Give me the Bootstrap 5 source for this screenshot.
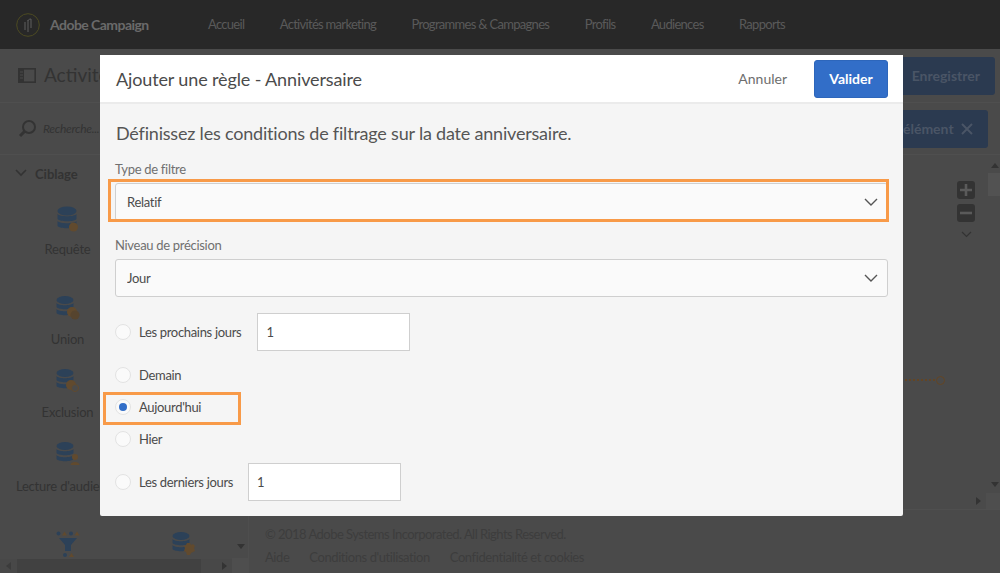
<!DOCTYPE html>
<html lang="fr">
<head>
<meta charset="utf-8">
<title>Adobe Campaign</title>
<link href="https://cdn.jsdelivr.net/npm/bootstrap@5.3.0/dist/css/bootstrap.min.css" rel="stylesheet">
<style>
html,body{height:573px;overflow:hidden}
body{background:#4a4a4a;font-family:"Lato","Noto Sans",sans-serif;font-size:13px;color:#333;position:relative}
.top-bar{height:49px;background:#282828;padding-left:16px}
.brand-txt{font-size:14px;font-weight:700;color:#6a6a6a;margin-left:10px;white-space:nowrap;width:158px;letter-spacing:-.55px}
.top-link{font-size:13px;color:#5a5a5a;margin-right:35.4px;white-space:nowrap;letter-spacing:-.7px}
.tool-row{height:54px;padding:8px 5px 8px 18px;border-bottom:1px solid #4f4f4f}
.page-title{font-size:19px;color:#333;margin-left:8px}
.dim-btn{background:#2b3a50;color:#4a5566;border-radius:3px;height:38px;font-size:14px;font-weight:700;display:flex;align-items:center;padding:0 15px}
.search-row{height:52px;padding-right:12px;border-bottom:1px solid #4f4f4f}
.search-side{width:249px;padding-left:18px;font-style:italic;color:#333;font-size:12px;gap:7px;letter-spacing:-.3px}
.work-row{height:418px}
.side-col{width:249px;border-right:1px solid #4e4e4e;position:relative}
.side-head{padding:10px 0 0 15px;height:33px;gap:8px;color:#333;font-weight:700;font-size:13px}
.tile-grid{display:grid;grid-template-columns:135px 100px;flex:1 1 0;min-height:0;overflow:hidden}
.tile{grid-column:1;text-align:center;color:#333;font-size:13px;height:73px;white-space:nowrap;letter-spacing:-.2px}
.tile svg{display:block;margin:0 auto 10px}
.tile.tile-first{height:108px;padding-top:18px}
.tile.tile-first svg{margin-bottom:7px}
.tile.tile-last{height:89px}
.tile.tile-last svg{margin-bottom:11px}
.tile.tile-b{grid-column:2;grid-row:5;text-align:left;padding:1px 0 0 37px}
.tile.tile-b svg{margin:0}
.tile.tile-a{grid-row:5}
.hscroll{height:14px;background:#484848;padding:0 0 0 17px;position:relative}
.hscroll-thumb{width:184px;height:14px;background:#414141}
.hscroll-end{position:absolute;right:0;top:-1px;width:16px;height:15px;background:#4e4e4e}
.arrow-l{position:absolute;left:6px;top:3px;border:4px solid transparent;border-left:0;border-right:5px solid #3c3c3c}
.arrow-r{position:absolute;left:222px;top:3px;border:4px solid transparent;border-right:0;border-left:5px solid #333}
.arrow-d{position:absolute;left:237px;bottom:24px;border:4px solid transparent;border-bottom:0;border-top:5px solid #333}
.canvas-zone{flex:1 1 0;position:relative}
.round-key{width:18px;height:18px;background:#333;border-radius:3px;display:flex;align-items:center;justify-content:center}
.zoom-keys{position:absolute;left:708px;top:26px;gap:5px}
.wire{position:absolute;left:640px;top:224px;width:48px;height:2px;background:repeating-linear-gradient(90deg,#634524 0 2px,transparent 2px 4px)}
.wire-end{position:absolute;left:687px;top:221px;width:9px;height:9px;border:1.5px solid #634524;border-radius:50%}
.v-thumb{position:absolute;right:0;top:18px;width:12px;height:23px;background:#525252}
.tri-up{position:absolute;left:742px;top:8px;border:4px solid transparent;border-top:0;border-bottom:5px solid #333}
.tri-down{position:absolute;left:742px;top:327px;border:4px solid transparent;border-bottom:0;border-top:5px solid #333}
.tri-right{position:absolute;left:727px;top:342px;border:4px solid transparent;border-right:0;border-left:5px solid #333}
.corner-box{position:absolute;right:0;top:338px;width:14px;height:17px;background:#4e4e4e}
.h-line{position:absolute;left:0;right:0;top:354px;border-top:1px solid #4f4f4f}
.foot-zone{position:absolute;left:265px;top:525px;color:#3d3d3d;font-size:13px;white-space:nowrap;letter-spacing:-.53px}
.foot-zone a{color:#3d3d3d;text-decoration:none;margin-right:20px}
.foot-zone .foot-links{margin-top:3px;letter-spacing:-.42px}

.rule-dialog{position:absolute;left:100px;top:55px;width:803px;height:461px;background:#f5f5f5;border:0;border-radius:2px;overflow:visible}
.rule-head{height:49px;background:#fff;border-bottom:2px solid #ebebeb;padding:0 15px 0 16px}
.rule-title{font-size:18px;color:#4b4b4b;line-height:1;letter-spacing:-.13px}
.link-cancel{color:#6e6e6e;font-size:14px;margin-right:27px}
.btn-ok{background:#326ec8;border:1px solid #2d66bb;color:#fff;font-weight:700;font-size:14px;width:74px;height:38px;padding:0;border-radius:3px}
.rule-body{padding:17px 15px 0 15px}
.rule-desc{font-size:18px;color:#555;line-height:24px;margin-bottom:16px;padding-left:1px;letter-spacing:-.2px}
.rule-label{font-size:13px;color:#707070;line-height:16px;margin-bottom:6px;display:block;letter-spacing:-.3px}
.rule-select{height:38px;background-color:#fafafa;border:1px solid #cfcfcf;border-radius:3px;font-size:13px;color:#4b4b4b;padding:2px 11px 0;box-shadow:none;background-image:none;letter-spacing:-.3px}
.select-wrap{position:relative}
.select-wrap svg{position:absolute;right:10px;top:15px}
.orange-box{position:absolute;border:3px solid #f89a48;pointer-events:none}
.box-a{left:-7px;right:-1px;top:-4px;bottom:-1px}
.box-b{left:-12px;top:-7px;width:138px;height:33px}
.opt-row{position:relative;display:flex;align-items:center;font-size:13px;color:#4b4b4b;letter-spacing:-.32px}
.opt-txt{padding-top:2px}
.opt-dot{width:16px;height:16px;margin:0 8px 0 0;background:#fafafa;border:1px solid #e3e3e3;border-radius:50%;flex:none;display:flex;align-items:center;justify-content:center}
.opt-dot.on::after{content:"";width:8px;height:8px;background:#326ec8;border-radius:50%}
.num-box{width:153px;height:38px;background:#fff;border:1px solid #cfcfcf;border-radius:0;font-size:13px;color:#4b4b4b;padding:0 8px;box-shadow:none;margin-left:16px}
.rw-e .num-box{margin-left:15px}
.rw-a,.rw-e{margin-top:16px;height:38px}
.rw-b,.rw-c,.rw-d{margin-top:16px;height:16px}
</style>
</head>
<body>
<nav class="top-bar d-flex align-items-center">
  <svg width="24" height="24" viewBox="0 0 24 24" fill="none" stroke="#4c4a22" stroke-width="1"><circle cx="12" cy="12" r="11.3"/><path d="M9 17V9M12 19V7M15 15V6c-2 0-3 1-3 2" stroke="#5e5e5e"/></svg>
  <span class="brand-txt">Adobe Campaign</span>
  <span class="top-link">Accueil</span>
  <span class="top-link">Activités marketing</span>
  <span class="top-link">Programmes &amp; Campagnes</span>
  <span class="top-link">Profils</span>
  <span class="top-link">Audiences</span>
  <span class="top-link">Rapports</span>
</nav>
<div class="tool-row d-flex align-items-center justify-content-between">
  <div class="d-flex align-items-center">
    <svg width="18" height="15" viewBox="0 0 18 15" fill="none"><rect x=".8" y=".8" width="16.400" height="13.400" stroke="#333" stroke-width="1.600"/><rect x="1" y="1" width="5" height="13" fill="#333"/><path d="M2 4h3M2 7h3M2 10h3" stroke="#4a4a4a"/></svg>
    <span class="page-title">Activités</span>
  </div>
  <div class="dim-btn">Enregistrer</div>
</div>
<div class="search-row d-flex align-items-center">
  <div class="search-side d-flex align-items-center">
    <svg width="18" height="18" viewBox="0 0 18 18" fill="none" stroke="#333" stroke-width="2"><circle cx="11" cy="7" r="6"/><path d="M7 11 2 16" stroke-width="3"/></svg>
    <span>Recherche...</span>
  </div>
  <div class="ms-auto dim-btn">Ajouter un élément&nbsp;
    <svg class="ms-1" width="12" height="12" viewBox="0 0 12 12" stroke="#4a5566" stroke-width="2"><path d="M1 1l10 10M11 1 1 11"/></svg>
  </div>
</div>
<div class="work-row d-flex">
  <aside class="side-col d-flex flex-column">
    <div class="side-head d-flex align-items-start">
      <svg class="mt-1" width="12" height="8" viewBox="0 0 12 8" fill="none" stroke="#333" stroke-width="1.6"><path d="M1 1l5 5 5-5"/></svg>
      <span>Ciblage</span>
    </div>
    <div class="tile-grid">
      <div class="tile tile-first">
        <svg width="22" height="27" viewBox="0 0 22 27"><ellipse cx="10" cy="5" rx="9.500" ry="4.500" fill="#2c4158"/><path d="M.5 8c2 3 17 3 19 0v5c-2 3-17 3-19 0zM.5 15c2 3 17 3 19 0v5c-2 3-17 3-19 0z" fill="#2c4158"/><circle cx="16.500" cy="21" r="4.500" fill="#614a2e"/></svg>
        Requête
      </div>
      <div class="tile">
        <svg width="24" height="24" viewBox="0 0 24 24"><ellipse cx="9" cy="4" rx="8.500" ry="4" fill="#2c4158"/><path d="M.5 7c2 3 15 3 17 0v4c-2 3-15 3-17 0zM.5 13c2 3 15 3 17 0v4c-2 3-15 3-17 0z" fill="#2c4158"/><circle cx="16" cy="16" r="5" fill="#614a2e"/><circle cx="19" cy="19" r="4.500" fill="#56442e"/></svg>
        Union
      </div>
      <div class="tile">
        <svg width="24" height="24" viewBox="0 0 24 24"><ellipse cx="9" cy="4" rx="8.500" ry="4" fill="#2c4158"/><path d="M.5 7c2 3 15 3 17 0v4c-2 3-15 3-17 0zM.5 13c2 3 15 3 17 0v4c-2 3-15 3-17 0z" fill="#2c4158"/><circle cx="15" cy="16" r="5" fill="#614a2e"/><circle cx="19" cy="19" r="3.500" fill="#4a4a4a" stroke="#614a2e"/></svg>
        Exclusion
      </div>
      <div class="tile tile-last">
        <svg width="24" height="24" viewBox="0 0 24 24"><ellipse cx="9" cy="4" rx="8.500" ry="4" fill="#2c4158"/><path d="M.5 7c2 3 15 3 17 0v4c-2 3-15 3-17 0zM.5 13c2 3 15 3 17 0v4c-2 3-15 3-17 0z" fill="#2c4158"/><circle cx="19" cy="15" r="3" fill="#614a2e"/><path d="M14.500 23c0-4 9-4 9 0z" fill="#614a2e"/></svg>
        Lecture d'audience
      </div>
      <div class="tile tile-a">
        <svg width="24" height="26" viewBox="0 0 24 26"><g fill="#2c4158"><circle cx="2.500" cy="2.500" r="2"/><circle cx="15" cy="2.500" r="2"/><path d="M3 7h18l-6 7v6h-6v-6z"/><circle cx="9" cy="24" r="2"/></g><g fill="#614a2e"><path d="M6 4.500l2.500-4 2.500 4zM18.500 4.500l2.500-4 2.500 4zM13 26l2.500-4 2.500 4z"/></g></svg>
      </div>
      <div class="tile tile-b">
        <svg width="24" height="24" viewBox="0 0 24 24"><ellipse cx="9" cy="4" rx="8.500" ry="4" fill="#2c4158"/><path d="M.5 7c2 3 15 3 17 0v4c-2 3-15 3-17 0zM.5 13c2 3 15 3 17 0v4c-2 3-15 3-17 0z" fill="#2c4158"/><path d="M15 11h3l1 2 2-1 2 2-1 2 1 3-2 1-2 1-1 2h-3l-1-3-2-1 1-3-1-2 2-1z" fill="#614a2e"/></svg>
      </div>
    </div>
    <div class="hscroll">
      <div class="arrow-l"></div>
      <div class="hscroll-thumb"></div>
      <div class="arrow-r"></div>
      <div class="hscroll-end"></div>
    </div>
    <div class="arrow-d"></div>
  </aside>
  <section class="canvas-zone">
    <div class="wire"></div>
    <div class="wire-end"></div>
    <div class="zoom-keys d-flex flex-column">
      <div class="round-key"><svg width="12" height="12" viewBox="0 0 12 12" stroke="#5a5a5a" stroke-width="2.600"><path d="M6 0v12M0 6h12"/></svg></div>
      <div class="round-key"><svg width="12" height="12" viewBox="0 0 12 12" stroke="#5a5a5a" stroke-width="2.600"><path d="M0 6h12"/></svg></div>
      <svg class="ms-1 mt-1" width="11" height="7" viewBox="0 0 11 7" fill="none" stroke="#333" stroke-width="1.200"><path d="M1 1l4.500 4.500L10 1"/></svg>
    </div>
    <div class="tri-up"></div>
    <div class="v-thumb"></div>
    <div class="tri-down"></div>
    <div class="tri-right"></div>
    <div class="corner-box"></div>
    <div class="h-line"></div>
  </section>
</div>
<div class="foot-zone">
  <div>© 2018 Adobe Systems Incorporated. All Rights Reserved.</div>
  <div class="foot-links"><a href="#">Aide</a><a href="#">Conditions d'utilisation</a><a href="#">Confidentialité et cookies</a></div>
</div>

<div class="modal-content rule-dialog">
  <div class="rule-head d-flex align-items-center">
    <h5 class="rule-title mb-0 fw-normal">Ajouter une règle - Anniversaire</h5>
    <span class="link-cancel ms-auto">Annuler</span>
    <button type="button" class="btn btn-ok">Valider</button>
  </div>
  <div class="rule-body">
    <p class="rule-desc">Définissez les conditions de filtrage sur la date anniversaire.</p>
    <label class="rule-label">Type de filtre</label>
    <div class="select-wrap mb-3">
      <select class="form-select rule-select"><option>Relatif</option></select>
      <svg width="14" height="9" viewBox="0 0 14 9" fill="none" stroke="#555" stroke-width="1.400"><path d="M1 1l6 6 6-6"/></svg>
      <div class="orange-box box-a"></div>
    </div>
    <label class="rule-label">Niveau de précision</label>
    <div class="select-wrap">
      <select class="form-select rule-select"><option>Jour</option></select>
      <svg width="14" height="9" viewBox="0 0 14 9" fill="none" stroke="#555" stroke-width="1.400"><path d="M1 1l6 6 6-6"/></svg>
    </div>
    <div class="opt-row rw-a"><span class="opt-dot"></span><span class="opt-txt">Les prochains jours</span><input class="form-control num-box" value="1"></div>
    <div class="opt-row rw-b"><span class="opt-dot"></span><span class="opt-txt">Demain</span></div>
    <div class="opt-row rw-c"><span class="opt-dot on"></span><span class="opt-txt">Aujourd'hui</span><div class="orange-box box-b"></div></div>
    <div class="opt-row rw-d"><span class="opt-dot"></span><span class="opt-txt">Hier</span></div>
    <div class="opt-row rw-e"><span class="opt-dot"></span><span class="opt-txt">Les derniers jours</span><input class="form-control num-box" value="1"></div>
  </div>
</div>
<script src="https://cdn.jsdelivr.net/npm/bootstrap@5.3.0/dist/js/bootstrap.bundle.min.js"></script>
</body>
</html>
